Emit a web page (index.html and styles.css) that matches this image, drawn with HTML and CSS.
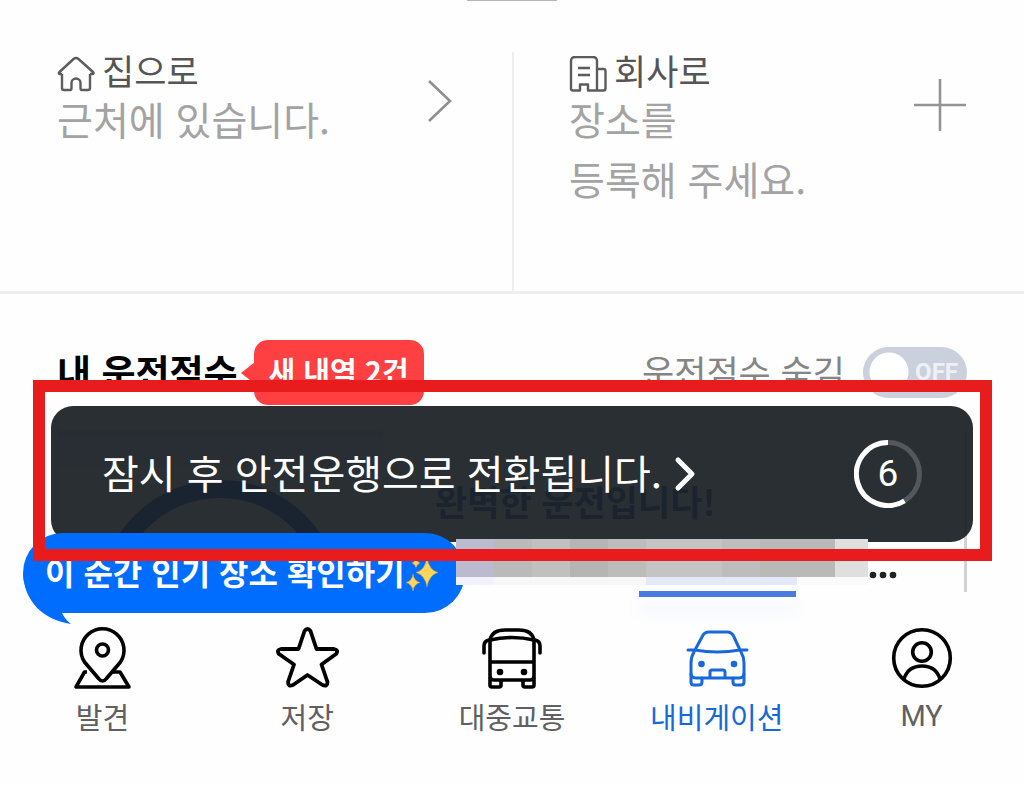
FILE: index.html
```html
<!DOCTYPE html>
<html lang="ko">
<head>
    <meta charset="UTF-8">
    <meta name="viewport" content="width=device-width, initial-scale=1.0">
    <title>내비게이션</title>
    <link rel="stylesheet" href="styles.css">
</head>
<body>
    <div class="handle"></div>

    <!-- 집 / 회사 바로가기 -->
    <section class="shortcuts">
        <a class="shortcut" href="#home">
            <div>
                <h2 class="shortcut-title">
                    <svg width="38" height="36" viewBox="0 0 38 36" fill="none" stroke="#5c5c5c" stroke-width="2.4" stroke-linejoin="round">
                        <path d="M5 18v14q0 2 2 2h6q1.500 0 1.500-2v-5a4.500 4.500 0 0 1 9 0v5q0 2 1.500 2h6q2 0 2-2V18M5 18H3q-2 0-.5-2L16.500 3q2.500-2 5 0l14.500 13q1.500 2-.5 2H33"/>
                    </svg>
                    집으로
                </h2>
                <p class="shortcut-text">근처에 있습니다.</p>
            </div>
            <svg class="chevron" width="28" height="44" viewBox="0 0 28 44" fill="none" stroke="#8f8f8f" stroke-width="2.6">
                <path d="M3 2l21 20L3 42"/>
            </svg>
        </a>
        <a class="shortcut" href="#work">
            <div>
                <h2 class="shortcut-title">
                    <svg width="38" height="36" viewBox="0 0 38 36" fill="none" stroke="#5c5c5c" stroke-width="2.4" stroke-linejoin="round">
                        <path d="M28 34.500V5q0-4-4-4H6Q2 1 2 5v27.500q0 2 2 2h7v-6h8v6h15.500q2 0 2-2V15q0-2-2-2H28M9 12h12M9 19h12"/>
                    </svg>
                    회사로
                </h2>
                <p class="shortcut-text">장소를<br>등록해 주세요.</p>
            </div>
            <svg class="plus" width="52" height="52" viewBox="0 0 52 52" fill="none" stroke="#949494" stroke-width="2.6">
                <path d="M26 0v52M0 26h52"/>
            </svg>
        </a>
    </section>

    <main class="score">
        <div class="score-head">
            <h2 class="score-title">내 운전점수</h2>
            <span class="badge">새 내역 2건</span>
            <label class="hide-label" for="hideScore">운전점수 숨김</label>
            <span class="toggle">
                <input type="checkbox" id="hideScore">
                <span class="toggle-text">OFF</span>
            </span>
        </div>

        <div class="score-card">
            <div class="gauge">
                <svg width="242" height="150" viewBox="0 0 242 150" fill="none" stroke="#1e5fd8" stroke-width="18">
                    <circle cx="121" cy="121" r="112"/>
                </svg>
            </div>
            <p class="score-message">완벽한 운전입니다!</p>
        </div>

        <!-- 안전운행 전환 알림 -->
        <button class="toast" type="button">
            <span class="toast-text">잠시 후 안전운행으로 전환됩니다.</span>
            <svg width="24" height="36" viewBox="0 0 24 36" fill="none" stroke="#fff" stroke-width="5" stroke-linecap="round" stroke-linejoin="round">
                <path d="M6 4l14 14L6 32"/>
            </svg>
            <span class="countdown">
                <svg width="68" height="68" viewBox="0 0 68 68" fill="none" stroke-width="5">
                    <circle cx="34" cy="34" r="31.500" stroke="#54585c"/>
                    <path d="M34 2.500a31.500 31.500 0 1 0 16.500 58.300" stroke="#fff"/>
                </svg>
                <span class="countdown-number">6</span>
            </span>
        </button>

        <a class="bubble" href="#popular">
            <span class="bubble-text">이 순간 인기 장소 확인하기</span>
            <svg width="36" height="40" viewBox="0 0 36 40" fill="#fbd55c" stroke="#c99a35" stroke-width="0.6">
                <path d="M22 5q2 12 11 14.500q-9 2.500-11 14.500q-2-12-11-14.500q9-2.500 11-14.500z"/>
                <path d="M8 21q1 7 7 8.500q-6 1.500-7 8.500q-1-7-7-8.500q6-1.500 7-8.500z"/>
                <path d="M11 5q1 4 4 5q-3 1-4 4.500q-1-3.500-4-4.500q3-1 4-5z"/>
            </svg>
            <svg class="bubble-tail" width="49" height="52" viewBox="0 0 49 52" fill="#006dff">
                <path d="M0 0c1 29 21 47 48 51c-4-3-7-7-9-11L40 0z"/>
            </svg>
        </a>

        <div class="place">
            <div class="place-row">
                <svg width="412" height="46" viewBox="0 0 412 46" shape-rendering="crispEdges">
                    <path fill="#bbbbcf" d="M0 0h38v38H0z"/>
                    <path fill="#b9bab9" d="M38 0h38v38H38z"/>
                    <path fill="#c0c0bf" d="M76 0h38v38H76z"/>
                    <path fill="#b5b5b4" d="M114 0h38v38h-38z"/>
                    <path fill="#bcbcbb" d="M152 0h38v38h-38z"/>
                    <path fill="#c4c4c4" d="M190 0h76v38h-76z"/>
                    <path fill="#bdbdbd" d="M266 0h38v38h-38z"/>
                    <path fill="#b9b9b8" d="M304 0h75v38h-75z"/>
                    <path fill="#dfdfe0" d="M379 0h33v38h-33z"/>
                    <path fill="#f1f2fc" d="M0 38h38v8H0z"/>
                    <path fill="#f7f7f8" d="M38 38h152v8H38z"/>
                    <path fill="#e5e8f6" d="M190 38h151v8H190z"/>
                    <path fill="#fbfbfc" d="M341 38h71v8h-71z"/>
                </svg>
                <button class="more" type="button" aria-label="더보기">
                    <svg width="28" height="8" viewBox="0 0 28 8" fill="#222">
                        <circle cx="4" cy="4" r="3.300"/>
                        <circle cx="14" cy="4" r="3.300"/>
                        <circle cx="24" cy="4" r="3.300"/>
                    </svg>
                </button>
            </div>
            <div class="underline"></div>
        </div>

        <div class="highlight"></div>
    </main>

    <!-- 하단 메뉴 -->
    <nav class="tabs">
        <a class="tab" href="#discover">
            <svg width="64" height="64" viewBox="0 0 64 64" fill="none" stroke="#000" stroke-width="3.600" stroke-linejoin="round">
                <path d="M17 47h-2.500L6 62h53L50 47h-8.500"/>
                <path d="M32.500 56q-2 0-3.500-2L14.500 37a21.500 21.500 0 1 1 36 0L36 54q-1.500 2-3.500 2z"/>
                <circle cx="32.500" cy="25" r="6"/>
            </svg>
            발견
        </a>
        <a class="tab" href="#saved">
            <svg width="64" height="64" viewBox="0 0 64 64" fill="none" stroke="#000" stroke-width="3.800" stroke-linejoin="round">
                <path d="M29.500 6q3-4 6 0l6 18H59q5 1 2 5L46.500 39.500 52.500 57q0 5-5 3L32.500 50 18 60q-5 2-5-3l6-17.500L4 29q-3-4 2-5h17.500z"/>
            </svg>
            저장
        </a>
        <a class="tab" href="#transit">
            <svg width="64" height="64" viewBox="0 0 64 64" fill="none" stroke="#000" stroke-width="3.600" stroke-linecap="round" stroke-linejoin="round">
                <path d="M10 51V15Q12 5 25 5h14q13 0 15 10v36q0 4-4 4H14q-4 0-4-4M10 15q22-5 44 0M10 37h44"/>
                <path d="M9 15q-5 1-5 6v7M55 15q5 1 5 6v7M10 53v7q0 2 2 2h7q2 0 2-2v-4M43 56v4q0 2 2 2h7q2 0 2-2v-7"/>
                <circle cx="20" cy="47" r="1.500" fill="#000"/>
                <circle cx="44" cy="47" r="1.500" fill="#000"/>
            </svg>
            대중교통
        </a>
        <a class="tab active" href="#navi">
            <svg width="64" height="64" viewBox="0 0 64 64" fill="none" stroke="#1769db" stroke-width="3" stroke-linecap="round" stroke-linejoin="round">
                <path d="M3 25h7L17 12q2-5 7-5h18q5 0 7 5l6 13h7M10 25q22 4 45 0M9 27q-3 5-3 11v10q0 5 5 5h43q5 0 5-5V38q0-6-3-11"/>
                <path d="M6 49v8q0 3 3 3h5q3 0 3-3v-4M48 53v4q0 3 3 3h5q3 0 3-3v-8M25 52v-5q0-2 2-2h11q2 0 2 2v5"/>
                <circle cx="16.500" cy="39" r="1.800" fill="#1769db"/>
                <circle cx="49" cy="39" r="1.800" fill="#1769db"/>
            </svg>
            내비게이션
        </a>
        <a class="tab" href="#my">
            <svg width="64" height="64" viewBox="0 0 64 64" fill="none" stroke="#000" stroke-width="3.600">
                <circle cx="32" cy="33" r="28.300"/>
                <circle cx="32" cy="27" r="9.300"/>
                <path d="M14 54q4-13 18-13t18 13"/>
            </svg>
            <span class="latin">MY</span>
        </a>
    </nav>
</body>
</html>
```
FILE: styles.css
```css
* {
    box-sizing: border-box;
}

body {
    margin: 0;
    min-height: 100vh;
    background-color: #fefefe;
    font-family: "Noto Sans CJK KR", sans-serif;
    color: #000;
}

h2, p {
    margin: 0;
}

a {
    color: inherit;
    text-decoration: none;
}

button {
    border: none;
    font-family: inherit;
    cursor: pointer;
}

svg {
    display: block;
    flex-shrink: 0;
}

.latin {
    font-family: Roboto, sans-serif;
}

.handle {
    width: 90px;
    height: 1px;
    margin: 0 auto;
    background-color: #b5b5b5;
}

/* 바로가기 */
.shortcuts {
    display: grid;
    grid-template-columns: 1fr 1fr;
    padding-top: 51px;
    border-bottom: 3px solid #eee;
}

.shortcut {
    display: flex;
    justify-content: space-between;
    align-items: flex-start;
    min-height: 239px;
    padding: 0 58px 0 57px;
}

.shortcut + .shortcut {
    padding-left: 55px;
    border-left: 2px solid #eee;
}

.shortcut-title {
    display: flex;
    align-items: center;
    gap: 7px;
    height: 36px;
    font-size: 35px;
    font-weight: 400;
    line-height: 36px;
    color: #555;
}

.shortcut-title svg {
    margin-top: 8px;
}

.shortcut-text {
    font-size: 39px;
    line-height: 60px;
    color: #a3a3a3;
}

.chevron,
.plus {
    margin-top: 27px;
}

/* 운전점수 */
.score {
    position: relative;
    padding: 46px 57px 0;
}

.score-head {
    display: flex;
    align-items: center;
    height: 65px;
}

.score-title {
    padding-bottom: 4px;
    font-size: 37px;
    font-weight: 700;
}

.badge {
    position: relative;
    height: 65px;
    margin-left: 16px;
    padding: 0 15px;
    border-radius: 14px;
    background-color: #ff4043;
    color: #fff;
    font-size: 29px;
    font-weight: 700;
    line-height: 60px;
}

.badge::before {
    content: "";
    position: absolute;
    left: -13px;
    top: 22px;
    border: 11px solid transparent;
    border-left: none;
    border-right: 14px solid #ff4043;
}

.hide-label {
    margin-left: auto;
    padding-bottom: 4px;
    font-size: 35px;
    color: #858585;
}

.toggle {
    position: relative;
    width: 104px;
    height: 51px;
    margin-left: 18px;
}

.toggle input {
    appearance: none;
    width: 100%;
    height: 100%;
    margin: 0;
    border-radius: 26px;
    background: radial-gradient(circle at 26px 25px, #fff 19px, #cbd1dc 20px);
}

.toggle-text {
    position: absolute;
    right: 9px;
    top: 0;
    color: #eef0f4;
    font-family: Roboto, sans-serif;
    font-size: 24px;
    font-weight: 700;
    line-height: 51px;
    pointer-events: none;
}

.score-card {
    display: grid;
    grid-template-columns: 326px 1fr;
    height: 161px;
    margin-top: 26px;
    border-right: 3px solid #d2d2d2;
    overflow: hidden;
}

.gauge {
    display: flex;
    justify-content: center;
    padding-top: 49px;
    height: 148px;
    overflow: hidden;
    background: linear-gradient(#d6e3ff, #fefefe 60px);
}

.score-message {
    padding: 44px 0 0 52px;
    color: #1b55b8;
    font-size: 35px;
    font-weight: 700;
}

/* 알림 */
.toast {
    position: absolute;
    left: 51px;
    right: 51px;
    top: 112px;
    display: flex;
    align-items: center;
    gap: 10px;
    height: 136px;
    padding: 0 51px;
    border-radius: 22px;
    background-color: rgba(26, 31, 35, 0.93);
    color: #fff;
}

.toast-text {
    padding-bottom: 4px;
    font-size: 40px;
}

.countdown {
    position: relative;
    margin-left: auto;
}

.countdown-number {
    position: absolute;
    left: 0;
    right: 0;
    top: 0;
    font-family: Roboto, sans-serif;
    font-size: 37px;
    line-height: 68px;
    text-align: center;
}

.bubble {
    position: absolute;
    left: 23px;
    top: 239px;
    display: flex;
    align-items: center;
    height: 80px;
    padding: 0 24px 0 22px;
    border-radius: 40px;
    background-color: #006dff;
    color: #fff;
    font-size: 32px;
    font-weight: 700;
}

.bubble-text {
    padding-bottom: 4px;
}

.bubble-tail {
    position: absolute;
    left: 0;
    top: 40px;
    z-index: -1;
}

.place {
    position: absolute;
    left: 456px;
    top: 245px;
}

.place-row {
    display: flex;
    align-items: center;
}

.more {
    padding: 26px 0 0 1px;
    background: none;
}

.underline {
    width: 157px;
    height: 6px;
    margin: 6px 0 0 183px;
    background-color: #4a7be0;
    box-shadow: 0 14px 16px rgba(74, 123, 224, 0.1);
}

/* 빨간 강조 테두리 */
.highlight {
    position: absolute;
    left: 33px;
    right: 32px;
    top: 86px;
    height: 181px;
    border: 12px solid #e81c1c;
    pointer-events: none;
}

/* 하단 메뉴 */
.tabs {
    display: grid;
    grid-template-columns: repeat(5, 1fr);
    padding-top: 33px;
}

.tab {
    display: flex;
    flex-direction: column;
    align-items: center;
    gap: 5px;
    color: #606060;
    font-size: 29px;
    line-height: 44px;
}

.tab.active {
    color: #1769db;
}
```
